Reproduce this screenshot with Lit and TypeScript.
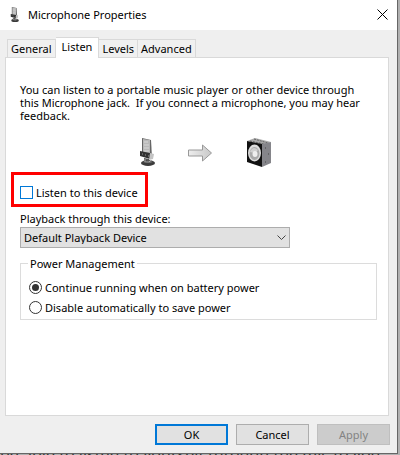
import { LitElement, html, css, svg } from "lit";
import { customElement, property, state } from "lit/decorators.js";
import { classMap } from "lit/directives/class-map.js";

const microphone = svg`
  <path d="M7 0 L16 2 L17 19 L7 17 Z" fill="#666"/>
  <path d="M8 1 L15 2 L15 17 L8 16 Z" fill="#b9b9b9"/>
  <path d="M9 4 L13 4 M9 7 L14 7 M9 10 L14 10 M9 13 L14 13" stroke="#d8d8d8"/>
  <path d="M5 13 L15 15 L15 21 L5 18 Z" fill="#333"/>
  <path d="M7 16 H8 M10 17 H11 M13 18 H14" stroke="#999"/>
  <path d="M15 15 L19 16 L18 21 L14 22 Z" fill="#c4c4c4"/>
  <path d="M9 20 L14 21 L14 25 L9 25 Z" fill="#555"/>
  <ellipse cx="13" cy="25" rx="7" ry="3" fill="#3b3b3b"/>
  <path d="M8 24 Q13 21 18 24 Q13 26 8 24Z" fill="#777"/>
  <path d="M10 21 V24 M16 22 L14 24" stroke="#aaa"/>`;

@customElement("app-root")
export class AppRoot extends LitElement {
  @property() heading = "Microphone Properties";
  @state() private tab = "Listen";
  private tabs = ["General", "Listen", "Levels", "Advanced"];

  static styles = css`
    :host {
      display: flex;
      flex-direction: column;
      box-sizing: border-box;
      height: 100vh;
      overflow: hidden;
      padding-right: 2px;
      background: #b0b0b0;
      color: #000;
      font: 11px/13px "Noto Sans", "Open Sans", sans-serif;
    }
    * { box-sizing: border-box; }
    button, select { font: inherit; color: inherit; border-radius: 0; margin: 0; }
    .dialog {
      flex: 1;
      display: flex;
      flex-direction: column;
      background: #efefef;
      border-right: 1px solid #666;
      border-bottom: 1px solid #666;
    }
    .title {
      display: flex;
      align-items: center;
      height: 30px;
      padding: 0 9px 2px 8px;
      background: #fff;
    }
    .title h1 { flex: 1; margin: 0 0 0 7px; font: inherit; }
    .close { display: flex; padding: 0; border: 0; background: none; }
    .tabs { display: flex; align-items: flex-end; height: 27px; padding-left: 7px; }
    .tab {
      height: 18px;
      padding: 0 3px;
      border: 1px solid #d9d9d9;
      border-width: 1px 1px 0 0;
      background: #f0f0f0;
      white-space: nowrap;
    }
    .tab:first-child { border-left-width: 1px; }
    .active { height: 21px; margin-bottom: -1px; padding: 0 6px 3px; background: #fff; position: relative; }
    .panel {
      flex: 1;
      margin: 0 8px 0 5px;
      padding: 25px 11px 0 14px;
      border: 1px solid #d9d9d9;
      background: #fff;
    }
    .intro { margin: 0; white-space: pre-line; }
    .flow { display: flex; align-items: center; height: 30px; margin: 16px 0 0 115px; }
    .arrow { margin: 0 33px 0 28px; }
    .check {
      display: flex;
      align-items: center;
      width: max-content;
      height: 35px;
      margin: 4px 0 5px -9px;
      padding: 6px 7px 0 6px;
      border: 3px solid #f00;
    }
    .box {
      appearance: none;
      width: 13px;
      height: 13px;
      margin: 0 3px 0 0;
      border: 1px solid #0078d7;
      background: #fff;
    }
    .box:checked { background: #0078d7; }
    .caption { display: block; }
    .picker { display: block; position: relative; width: 270px; max-width: 100%; margin-top: 2px; }
    .picker select {
      appearance: none;
      display: block;
      width: 100%;
      height: 21px;
      padding: 0 24px 0 3px;
      border: 1px solid #adadad;
      background: #e1e1e1;
    }
    .chevron { position: absolute; right: 4px; top: 8px; pointer-events: none; }
    fieldset {
      margin: 9px 0 0;
      padding: 7px 8px 2px;
      border: 1px solid #dcdcdc;
      min-width: 0;
    }
    legend { padding: 0 2px; margin-left: -1px; }
    .option { display: flex; align-items: center; height: 20px; }
    .option input {
      appearance: none;
      display: grid;
      place-items: center;
      width: 13px;
      height: 13px;
      margin: 0 3px 0 0;
      border: 1px solid #333;
      border-radius: 50%;
    }
    .option input:checked::before {
      content: "";
      width: 7px;
      height: 7px;
      border-radius: 50%;
      background: #333;
    }
    .actions { display: flex; justify-content: flex-end; gap: 8px; padding: 8px 7px 8px 0; }
    .actions button { width: 73px; height: 21px; padding: 0; border: 1px solid #adadad; background: #e1e1e1; }
    .actions .primary { border: 2px solid #0078d7; }
    .actions button:disabled { border-color: #bfbfbf; background: #ccc; color: #838383; }
    .behind {
      height: 1px;
      overflow: hidden;
      color: #333;
      font-size: 16px;
      line-height: 1px;
      white-space: nowrap;
    }
  `;

  render() {
    return html`
      <main class="dialog">
        <header class="title">
          <svg width="13" height="15" viewBox="2 0 20 28">${microphone}</svg>
          <h1>${this.heading}</h1>
          <button class="close" aria-label="Close">
            <svg width="11" height="11" viewBox="0 0 11 11"><path d="M.5 .5 L10.5 10.5 M10.5 .5 L.5 10.5" stroke="#000"/></svg>
          </button>
        </header>
        <nav class="tabs" role="tablist">
          ${this.tabs.map((name) => html`
            <button role="tab" aria-selected=${this.tab === name}
              class=${classMap({ tab: true, active: this.tab === name })}
              @click=${() => (this.tab = name)}>${name}</button>`)}
        </nav>
        <section class="panel" role="tabpanel">
          <p class="intro">You can listen to a portable music player or other device through
            this Microphone jack.\u00a0 If you connect a microphone, you may hear
            feedback.</p>
          <div class="flow">
            <svg width="25" height="30" viewBox="0 0 25 30">${microphone}</svg>
            <svg class="arrow" width="25" height="18" viewBox="0 0 25 18">
              <defs><linearGradient id="shade"><stop stop-color="#eee"/><stop offset="1" stop-color="#c8c8c8"/></linearGradient></defs>
              <path d="M.5 6 H14.5 V1 L23.5 9 L14.5 17 V12 H.5Z" fill="url(#shade)" stroke="#999"/>
            </svg>
            <svg width="26" height="30" viewBox="0 0 26 30">
              <path d="M1 3 L9 0 L25 4 L18 7Z" fill="#aaa"/>
              <path d="M4 3 L18 6 M8 1 L22 5" stroke="#666" stroke-dasharray="2 1"/>
              <path d="M16 6 L25 4 V25 L16 29Z" fill="#85858a"/>
              <path d="M1 3 L16 6 V29 L1 24Z" fill="#111"/>
              <ellipse cx="8.5" cy="15" rx="6.5" ry="8.5" fill="#ddd"/>
              <ellipse cx="8.5" cy="15.5" rx="5" ry="6.5" fill="#aaa"/>
              <path d="M4 14 Q7 7 12 12 L9 15Z" fill="#d0d0d0"/>
              <ellipse cx="9" cy="16" rx="2.5" ry="3" fill="#eee"/>
              <path d="M19 10h1M22 16h1M19 24h1" stroke="#444"/>
            </svg>
          </div>
          <label class="check"><input class="box" type="checkbox" />Listen to this device</label>
          <label class="caption" for="device">Playback through this device:</label>
          <div class="picker">
            <select id="device"><option>Default Playback Device</option></select>
            <svg class="chevron" width="9" height="6" viewBox="0 0 9 6"><path d="M.5 .5 L4.5 4.5 L8.5 .5" fill="none" stroke="#444"/></svg>
          </div>
          <fieldset>
            <legend>Power Management</legend>
            <label class="option"><input type="radio" name="power" checked />Continue running when on battery power</label>
            <label class="option"><input type="radio" name="power" />Disable automatically to save power</label>
          </fieldset>
        </section>
        <footer class="actions">
          <button class="primary">OK</button>
          <button>Cancel</button>
          <button disabled>Apply</button>
        </footer>
      </main>
      <div class="behind" aria-hidden="true">be able to listen to yourself through the mic to you</div>
    `;
  }
}
